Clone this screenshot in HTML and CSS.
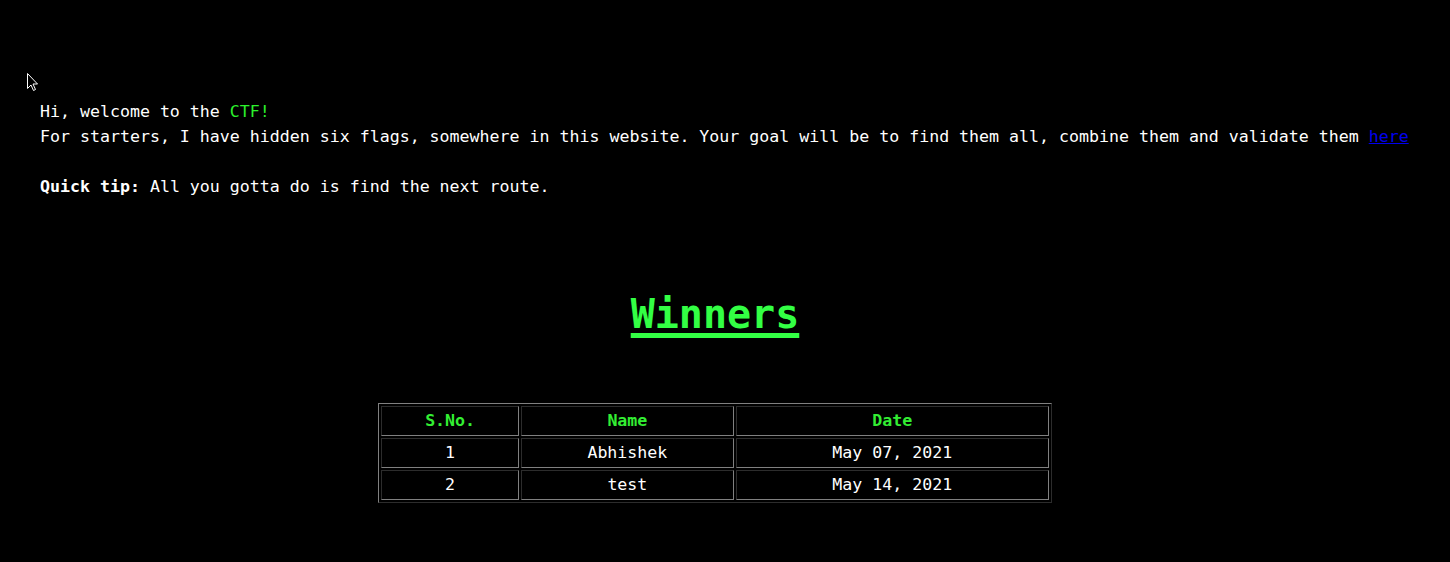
FILE: index.html
```html
<!DOCTYPE html>
<html>
<head>
<meta charset="utf-8">
<link rel="stylesheet" href="styles.css">
</head>
<body>
<svg class="cursor" width="12" height="19" viewBox="0 0 12 19"><path d="M0.5 0.5 L0.5 15.5 L4 12 L6.5 17.5 L8.5 16.5 L6 11 L10.5 11 Z" fill="#000" stroke="#fff" stroke-width="1"/></svg>
<main class="page">
  <p class="intro">Hi, welcome to the <span class="green">CTF!</span><br>For starters, I have hidden six flags, somewhere in this website. Your goal will be to find them all, combine them and validate them <a href="#" class="link">here</a><br><br><b>Quick tip:</b> All you gotta do is find the next route.</p>
  <section class="winners-section">
    <h1 class="title">Winners</h1>
    <div class="table-wrap">
      <table class="winners">
        <thead>
          <tr><th class="c1">S.No.</th><th class="c2">Name</th><th class="c3">Date</th></tr>
        </thead>
        <tbody>
          <tr><td>1</td><td>Abhishek</td><td>May 07, 2021</td></tr>
          <tr><td>2</td><td>test</td><td>May 14, 2021</td></tr>
        </tbody>
      </table>
    </div>
  </section>
</main>
</body>
</html>
```
FILE: styles.css
```css
html, body {
  margin: 0;
  background: #000;
}
body {
  color: #fff;
  font-family: "DejaVu Sans Mono", "Liberation Mono", monospace;
  font-size: 16.6px;
  position: relative;
  height: 562px;
  overflow: hidden;
}
.cursor {
  position: absolute;
  left: 27px;
  top: 73px;
}
.page {
  padding: 99px 40px 0 40px;
}
.intro {
  margin: 0;
  line-height: 25px;
  white-space: nowrap;
}
.green {
  color: #2cf22c;
}
.link {
  color: #0000ee;
}
.winners-section {
  margin-right: 20px;
}
.title {
  margin: 87px 0 0 0;
  text-align: center;
  color: #33ff44;
  font-size: 40px;
  line-height: 56px;
  text-decoration: underline;
  text-decoration-thickness: 5px;
  text-underline-offset: 5px;
}
.table-wrap {
  display: flex;
  justify-content: center;
  margin-top: 61px;
}
.winners {
  border: 1px outset #808080;
  border-spacing: 2px;
  width: 674px;
}
.winners th, .winners td {
  border: 1px inset #808080;
  text-align: center;
  height: 28px;
  padding: 0;
  line-height: 28px;
}
.winners th {
  color: #33ee33;
  font-weight: bold;
}
.c1 { width: 136px; }
.c2 { width: 210px; }
.c3 { width: 311px; }
```
